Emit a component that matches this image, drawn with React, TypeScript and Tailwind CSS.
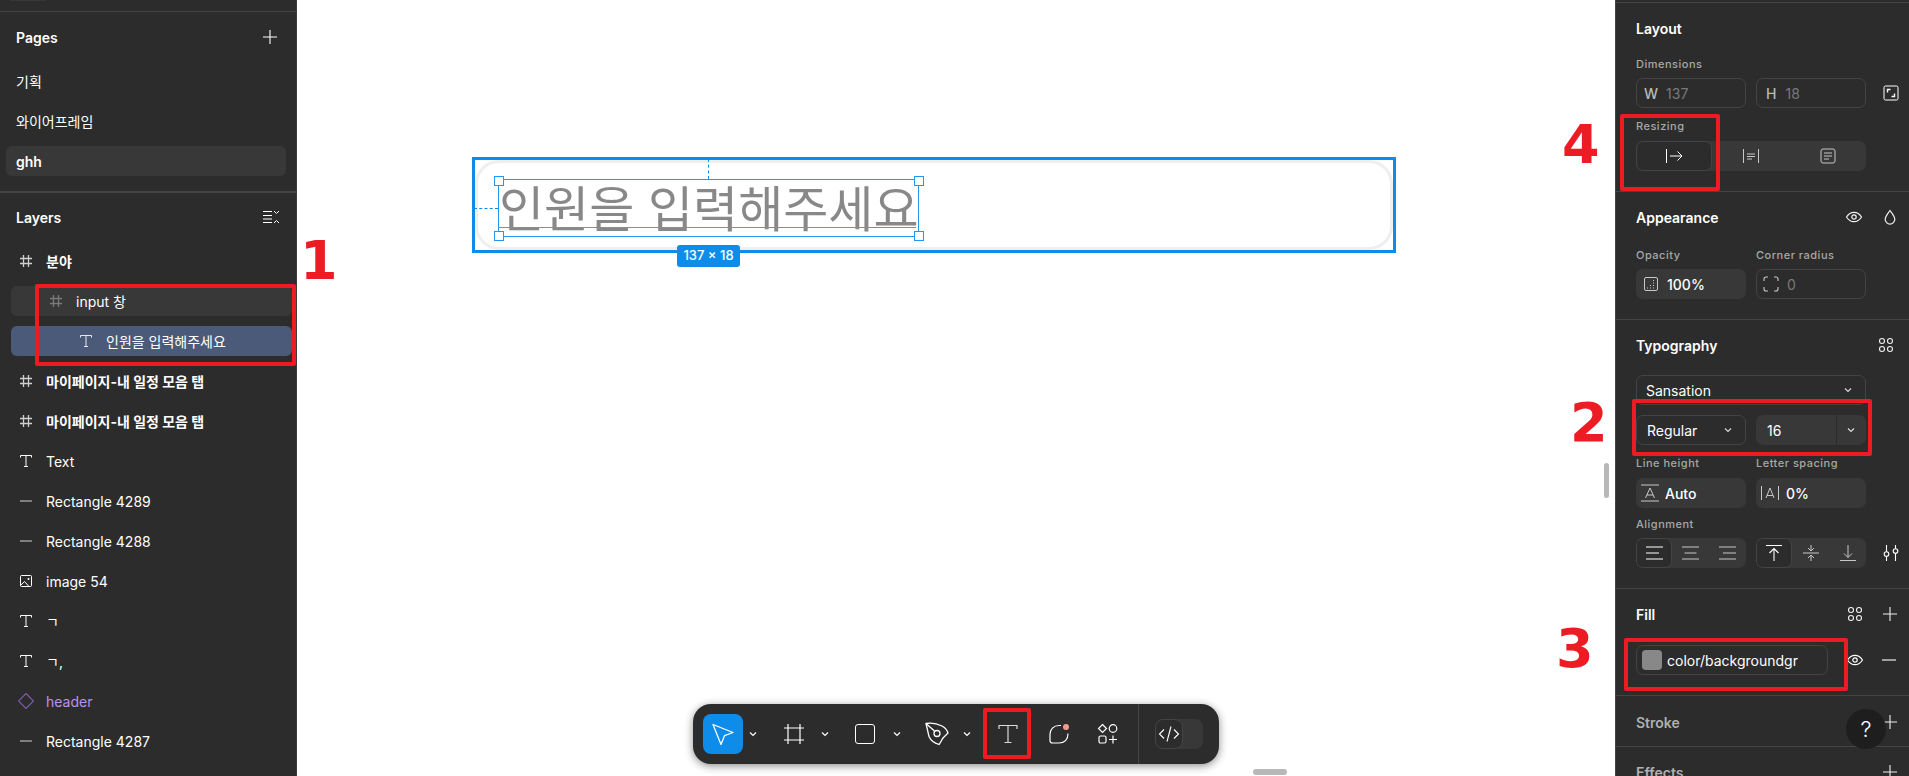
import React from "react";

type IconProps = { className?: string };
const S = ({ children, size = 16, box = 16, className = "" }: { children: React.ReactNode; size?: number; box?: number; className?: string }) => (
  <svg width={size} height={size} viewBox={`0 0 ${box} ${box}`} fill="none" stroke="currentColor" strokeWidth={1} className={`shrink-0 ${className}`}>
    {children}
  </svg>
);

const Hash = ({ className }: IconProps) => (
  <S className={className}><path d="M5.500 2v12M10.500 2v12M2 5.500h12M2 10.500h12" strokeWidth={1.3} /></S>
);
const TIcon = ({ className, size = 16 }: IconProps & { size?: number }) => (
  <S className={className} size={size}><path d="M2.500 4.500V2.500h11v2M8 2.500v11M6 13.500h4" /></S>
);
const Dash = () => <S><path d="M2 8h12" stroke="#9a9a9a" strokeWidth={1.5} /></S>;
const ImageIcon = () => (
  <S>
    <rect x="2.500" y="2.500" width="11" height="11" rx="1" />
    <path d="M2.500 12.500l4-4 4.500 5" />
    <circle cx="10.500" cy="6" r="1" fill="currentColor" stroke="none" />
  </S>
);
const Diamond = () => (
  <S><path d="M8 .5l7.500 7.500-7.500 7.500L.5 8z" stroke="#7d5ba6" strokeWidth={1.2} /></S>
);
const Plus = ({ size = 16 }: { size?: number }) => (
  <S size={size}><path d="M8 1v14M1 8h14" strokeWidth={1.1} /></S>
);
const Minus = () => <S><path d="M1 8h14" strokeWidth={1.1} /></S>;
const Eye = () => (
  <S size={18} box={18}>
    <path d="M1.500 9C3.500 5.800 6 4.300 9 4.300S14.500 5.800 16.500 9c-2 3.200-4.500 4.700-7.500 4.700S3.500 12.200 1.500 9z" strokeWidth={1.2} />
    <circle cx="9" cy="9" r="2.200" strokeWidth={1.2} />
  </S>
);
const Drop = () => (
  <S size={18} box={18}><path d="M9 2.500C6.500 5.800 4.200 8.300 4.200 11.300a4.800 4.800 0 0 0 9.600 0C13.800 8.300 11.500 5.800 9 2.500z" strokeWidth={1.2} /></S>
);
const Dots = () => (
  <S size={18} box={18}>
    <circle cx="5" cy="5" r="2.500" strokeWidth={1.1} />
    <circle cx="13" cy="5" r="2.500" strokeWidth={1.1} />
    <circle cx="5" cy="13" r="2.500" strokeWidth={1.1} />
    <circle cx="13" cy="13" r="2.500" strokeWidth={1.1} />
  </S>
);
const Chev = ({ className = "" }: IconProps) => (
  <svg width="8" height="6" viewBox="0 0 8 6" fill="none" stroke="currentColor" strokeWidth={1.2} className={`shrink-0 ${className}`}>
    <path d="M1 1.500l3 3 3-3" />
  </svg>
);

const Row = ({ icon, label, indent = "pl-[7px]", iconTone = "text-[#d0d0d0]", bold, bg, tone = "text-white" }: { icon: React.ReactNode; label: string; indent?: string; iconTone?: string; bold?: boolean; bg?: string; tone?: string }) => (
  <div className="h-10 flex items-center pl-[11px]">
    <div className={`h-[30px] w-[281px] flex items-center gap-3 rounded-md ${indent} ${bg ?? ""}`}>
      <span className={iconTone}>{icon}</span>
      <span className={`text-[14px] whitespace-nowrap ${bold ? "font-bold" : "font-normal"} ${tone}`}>{label}</span>
    </div>
  </div>
);

const Label = ({ children }: { children: React.ReactNode }) => (
  <div className="h-[14px] flex items-center text-[11px] font-medium tracking-[0.5px] text-[#a8a8a8] whitespace-nowrap">{children}</div>
);
const TitleRow = ({ title, muted, right, mr = "-mr-[10px]" }: { title: string; muted?: boolean; right?: React.ReactNode; mr?: string }) => (
  <div className="h-5 flex items-center justify-between text-[#f0f0f0]">
    <div className={`text-[14px] font-semibold ${muted ? "text-[#b0b0b0]" : "text-white"}`}>{title}</div>
    <div className={`flex items-center gap-[18px] ${mr}`}>{right}</div>
  </div>
);
const Box = ({ children, filled, className = "" }: { children: React.ReactNode; filled?: boolean; className?: string }) => (
  <div className={`h-[30px] w-[110px] shrink-0 rounded-[7px] flex items-center text-[14px] ${filled ? "bg-[#383838]" : "border border-[#444444]"} ${className}`}>{children}</div>
);

const Section = ({ children, className = "" }: { children: React.ReactNode; className?: string }) => (
  <section className={`px-5 border-b border-[#444444] ${className}`}>{children}</section>
);

const AlignLines = ({ kind }: { kind: "l" | "c" | "r" }) => {
  const d =
    kind === "l" ? "M1 3h17M1 9h13M1 15h17" : kind === "c" ? "M1 3h17M3.500 9h12M1 15h17" : "M1 3h17M5 9h13M1 15h17";
  return <S size={19} box={19} className={kind === "l" ? "text-white" : "text-[#c8c8c8]"}><path d={d} strokeWidth={1.1} /></S>;
};

const Toolbar = () => (
  <div className="absolute left-[396px] top-[704px] w-[526px] h-[60px] rounded-[18px] bg-[#2c2c2c] shadow-[0_2px_8px_rgba(0,0,0,0.45)] flex items-center pl-[10px] text-white">
    <div className="w-10 h-10 rounded-lg bg-[#0d8ce9] flex items-center justify-center">
      <svg width="24" height="24" viewBox="0 0 24 24" fill="none" stroke="currentColor" strokeWidth={1.3} strokeLinejoin="round">
        <path d="M2 2.500l20 8-8.500 3.200L10 22.500z" />
      </svg>
    </div>
    <Chev className="ml-[6px]" />
    <svg width="22" height="22" viewBox="0 0 22 22" fill="none" stroke="currentColor" strokeWidth={1.2} className="ml-[26px] shrink-0">
      <path d="M5 1v20M17 1v20M1 5h20M1 17h20" />
    </svg>
    <Chev className="ml-[16px]" />
    <div className="ml-[26px] w-5 h-5 shrink-0 rounded-[3px] border-[1.5px] border-white" />
    <Chev className="ml-[18px]" />
    <svg width="24" height="24" viewBox="0 0 24 24" fill="none" stroke="currentColor" strokeWidth={1.3} strokeLinejoin="round" className="ml-[24px] shrink-0">
      <path d="M1 1.500C6 .5 12 1.500 17 4c3 1.500 5 4 6 7l-5 5c-1.500 2-2 4-4 6.500C9 21 6 19 4 14.500 3 10 2 6 1 1.500z" />
      <circle cx="12" cy="11.500" r="3" />
      <path d="M1 1.500l8.500 7.500" />
    </svg>
    <Chev className="ml-[14px]" />
    <svg width="22" height="22" viewBox="0 0 22 22" fill="none" stroke="#d8d8d8" strokeWidth={1.2} className="ml-[26px] shrink-0">
      <path d="M2 6V2.500h18V6M11 2.500v17M7.500 19.500h7" />
    </svg>
    <svg width="24" height="24" viewBox="0 0 24 24" fill="none" stroke="currentColor" strokeWidth={1.2} className="ml-[28px] shrink-0">
      <path d="M14 3.500H12C6.500 3.500 3 7.500 3 12.500v6c0 1.500 1 2.500 2.500 2.500H12c5.500 0 9-3.500 9-9.500" />
      <circle cx="19" cy="5" r="3" fill="#f79a8c" stroke="none" />
    </svg>
    <svg width="22" height="22" viewBox="0 0 22 22" fill="none" stroke="currentColor" strokeWidth={1.2} className="ml-[26px] shrink-0">
      <path d="M5.500 1.500l4 4-4 4-4-4z" />
      <circle cx="16" cy="5.500" r="3.800" />
      <rect x="2" y="13" width="7" height="7" rx="1.500" />
      <path d="M16 12.500v8M12 16.500h8" />
    </svg>
    <div className="ml-[19px] w-px h-[60px] shrink-0 bg-[#444444]" />
    <div className="ml-[16px] w-12 h-[30px] shrink-0 rounded-lg bg-[#383838]">
      <div className="w-7 h-[30px] rounded-lg bg-[#2c2c2c] border border-[#444444] flex items-center justify-center">
        <svg width="22" height="18" viewBox="0 0 22 18" fill="none" stroke="currentColor" strokeWidth={1.1} className="shrink-0">
          <path d="M6 4.500L1.500 9 6 13.500M16 4.500L20.500 9 16 13.500M13 1.500L9 16.500" />
        </svg>
      </div>
    </div>
  </div>
);

const Handle = ({ x, y }: { x: number; y: number }) => (
  <div className="absolute w-[10px] h-[10px] bg-white border-[1.5px] border-[#2196f3]" style={{ left: x, top: y }} />
);

const RedBox = ({ className }: { className: string }) => (
  <div className={`absolute border-[4px] border-[#ed1c24] rounded-[2px] ${className}`} />
);
const RedNum = ({ n, className }: { n: string; className: string }) => (
  <div className={`absolute text-[54px] leading-[54px] font-bold text-[#ed1c24] font-['DejaVu_Sans',sans-serif] ${className}`}>{n}</div>
);

export default function App() {
  return (
    <div className="relative w-[1909px] h-[776px] overflow-hidden flex bg-white font-['Inter','Noto_Sans_CJK_KR',sans-serif]">
      {/* left */}
      <aside className="w-[297px] h-full shrink-0 bg-[#2c2c2c] border-r border-[#3c3c3c] overflow-hidden">
        <div className="h-3 border-b border-[#444444] pl-[10px]">
          <div className="w-[36px] h-px rounded-b bg-[#383838]" />
        </div>
        <div className="pt-[5px] pb-[10px] border-b-2 border-[#444444]">
          <div className="h-10 flex items-center justify-between pl-4 pr-[18px] text-white">
            <span className="text-[14px] font-semibold">Pages</span>
            <Plus />
          </div>
          <div className="mt-1">
            <div className="h-10 flex items-center pl-4 text-[14px] text-white">기획</div>
            <div className="h-10 flex items-center pl-4 text-[14px] text-white">와이어프레임</div>
            <div className="h-10 flex items-center pl-[6px]">
              <div className="h-[30px] w-[280px] rounded-md bg-[#383838] flex items-center pl-[10px] text-[14px] font-semibold text-white">ghh</div>
            </div>
          </div>
        </div>
        <div className="pt-[4px]">
          <div className="h-10 flex items-center justify-between pl-4 pr-[17px] text-white">
            <span className="text-[14px] font-semibold">Layers</span>
            <svg width="16" height="14" viewBox="0 0 16 14" fill="none" stroke="currentColor" strokeWidth={1}>
              <path d="M0 1.500h9M0 5.500h9M0 9h9M0 12.500h9M11 1l2.500 2.500L16 1M11 13l2.500-2.500L16 13" />
            </svg>
          </div>
          <div className="mt-1">
            <Row icon={<Hash />} label="분야" bold />
            <Row icon={<Hash />} label="input 창" indent="pl-[37px]" iconTone="text-[#7a7a7a]" bg="bg-[#383838]" />
            <Row icon={<TIcon />} label="인원을 입력해주세요" indent="pl-[67px]" iconTone="text-[#e8e8e8]" bg="bg-[#4a5a78]" />
            <Row icon={<Hash />} label="마이페이지-내 일정 모음 탭" bold />
            <Row icon={<Hash />} label="마이페이지-내 일정 모음 탭" bold />
            <Row icon={<TIcon />} label="Text" iconTone="text-white" />
            <Row icon={<Dash />} label="Rectangle 4289" />
            <Row icon={<Dash />} label="Rectangle 4288" />
            <Row icon={<ImageIcon />} label="image 54" iconTone="text-white" />
            <Row icon={<TIcon />} label="ㄱ" iconTone="text-white" />
            <Row icon={<TIcon />} label="ㄱ," iconTone="text-white" />
            <Row icon={<Diamond />} label="header" tone="text-[#b794f0]" />
            <Row icon={<Dash />} label="Rectangle 4287" />
          </div>
        </div>
      </aside>

      {/* canvas */}
      <main className="flex-1 relative">
        <div className="absolute left-[175px] top-[157px] w-[924px] h-[96px] border-[3px] border-[#0d8ce9]">
          <div className="w-full h-full rounded-[24px] border-[3px] border-[#efefef]" />
        </div>
        <div className="absolute left-[177px] top-[208px] w-[24px] border-t border-dashed border-[#0d8ce9]" />
        <div className="absolute left-[411px] top-[159px] h-[20px] border-l border-dashed border-[#0d8ce9]" />
        <div className="absolute left-[201px] top-[179px] w-[421px] h-[58px] border border-[#2196f3]" />
        <div className="absolute left-[202px] top-[181px] h-[58px] flex items-center text-[49px] leading-[58px] whitespace-nowrap text-[#888888]">인원을 입력해주세요</div>
        <div className="absolute left-[201px] top-[227px] w-[418px] h-px bg-[#3aa3f0]" />
        <Handle x={197} y={176} />
        <Handle x={617} y={176} />
        <Handle x={197} y={231} />
        <Handle x={617} y={231} />
        <div className="absolute left-[380px] top-[245px] w-[63px] h-[22px] rounded-[3px] bg-[#0d8ce9] text-white text-[13px] font-medium flex items-center justify-center whitespace-nowrap">137 × 18</div>
        <Toolbar />
        <div className="absolute left-[1307px] top-[463px] w-[5px] h-[35px] rounded-full bg-[#b8b8b8]" />
        <div className="absolute left-[956px] top-[769px] w-[34px] h-[6px] rounded-full bg-[#b8b8b8]" />
      </main>

      {/* right */}
      <aside className="w-[294px] h-full shrink-0 bg-[#2c2c2c] border-l border-[#444444] overflow-hidden text-white">
        <div className="h-[3px] border-b border-[#444444]" />
        <Section className="pt-[15px] h-[189px]">
          <TitleRow title="Layout" />
          <div className="mt-[19px]"><Label>Dimensions</Label></div>
          <div className="mt-[7px] flex gap-[10px] items-center">
            <Box className="pl-[7px] gap-[8px]"><span className="text-[#b8b8b8] font-medium">W</span><span className="text-[#7a7a7a]">137</span></Box>
            <Box className="pl-[9px] gap-[9px]"><span className="text-[#b8b8b8] font-medium">H</span><span className="text-[#7a7a7a]">18</span></Box>
            <svg width="16" height="16" viewBox="0 0 16 16" fill="none" stroke="currentColor" strokeWidth={1} className="ml-[7px] shrink-0">
              <rect x="1" y="1" width="14" height="14" rx="1.500" />
              <path d="M4.500 7.500v-3h3M11.500 8.500v3h-3" strokeWidth={1.4} />
            </svg>
          </div>
          <div className="mt-[11px]"><Label>Resizing</Label></div>
          <div className="mt-[8px] w-[230px] h-[30px] rounded-[7px] bg-[#383838] flex items-center">
            <div className="w-[76px] h-[30px] rounded-[7px] bg-[#2c2c2c] border border-[#444444] flex items-center justify-center">
              <svg width="18" height="14" viewBox="0 0 18 14" fill="none" stroke="currentColor" strokeWidth={1}>
                <path d="M1.500 0v14M5 7h12M12.500 2.500L17 7l-4.500 4.500" />
              </svg>
            </div>
            <div className="w-[77px] flex justify-center text-[#c8c8c8]">
              <svg width="16" height="14" viewBox="0 0 16 14" fill="none" stroke="currentColor" strokeWidth={1}>
                <path d="M.5 0v14M15.500 0v14M4 5h8M4 7.500h8M4 10h5" />
              </svg>
            </div>
            <div className="w-[77px] flex justify-center text-[#c8c8c8]">
              <svg width="16" height="16" viewBox="0 0 16 16" fill="none" stroke="currentColor" strokeWidth={1}>
                <rect x="1" y="1" width="14" height="14" rx="2" />
                <path d="M4 5h8M4 8h8M4 11h5" />
              </svg>
            </div>
          </div>
        </Section>

        <Section className="pt-[15px] h-[128px]">
          <TitleRow title="Appearance" right={<><Eye /><Drop /></>} />
          <div className="mt-[21px] flex gap-[10px]">
            <div className="w-[110px]"><Label>Opacity</Label></div>
            <div className="w-[110px]"><Label>Corner radius</Label></div>
          </div>
          <div className="mt-[7px] flex gap-[10px]">
            <Box filled className="pl-[8px] gap-[8px]">
              <svg width="14" height="14" viewBox="0 0 14 14" fill="none" stroke="#c8c8c8" strokeWidth={1} className="shrink-0">
                <rect x=".5" y=".5" width="13" height="13" rx="1.500" />
                <path d="M3 11h1M6 11h1M9 11h1M6 8.500h1M9 8.500h1M9 6h1M9 3.500h1" />
              </svg>
              <span className="font-medium ml-[1px]">100%</span>
            </Box>
            <Box className="pl-[6px] gap-[8px]">
              <svg width="16" height="16" viewBox="0 0 16 16" fill="none" stroke="#c8c8c8" strokeWidth={1.1} className="shrink-0">
                <path d="M1 5V3a2 2 0 0 1 2-2h2M11 1h2a2 2 0 0 1 2 2v2M15 11v2a2 2 0 0 1-2 2h-2M5 15H3a2 2 0 0 1-2-2v-2" />
              </svg>
              <span className="text-[#7a7a7a]">0</span>
            </Box>
          </div>
        </Section>

        <Section className="pt-[15px] h-[269px]">
          <TitleRow title="Typography" right={<Dots />} mr="-mr-[6px]" />
          <div className="mt-[20px] w-[230px] h-[30px] rounded-[7px] border border-[#444444] flex items-center justify-between pl-[9px] pr-[13px] text-[14px]">
            <span>Sansation</span><Chev className="text-[#d8d8d8]" />
          </div>
          <div className="mt-[10px] flex gap-[10px]">
            <Box className="justify-between pl-[10px] pr-[13px]"><span>Regular</span><Chev className="text-[#d8d8d8]" /></Box>
            <Box filled className="pl-[11px]">
              <span className="w-[69px]">16</span>
              <div className="w-px h-[30px] bg-[#2c2c2c]" />
              <Chev className="ml-[10px] text-[#d8d8d8]" />
            </Box>
          </div>
          <div className="mt-[11px] flex gap-[10px]">
            <div className="w-[110px]"><Label>Line height</Label></div>
            <div className="w-[110px]"><Label>Letter spacing</Label></div>
          </div>
          <div className="mt-[8px] flex gap-[10px]">
            <Box filled className="pl-[5px] gap-[6px]">
              <svg width="18" height="18" viewBox="0 0 18 18" fill="none" stroke="#c8c8c8" strokeWidth={1} className="shrink-0">
                <path d="M0 1h18M0 17h18M4.500 14L9 4l4.500 10M6 11h6" />
              </svg>
              <span className="font-medium">Auto</span>
            </Box>
            <Box filled className="pl-[4px] gap-[6px]">
              <svg width="20" height="16" viewBox="0 0 20 16" fill="none" stroke="#c8c8c8" strokeWidth={1} className="shrink-0">
                <path d="M1.500 1v14M18.500 1v14M6 13l4-10 4 10M7 10.500h6" />
              </svg>
              <span className="font-medium">0%</span>
            </Box>
          </div>
          <div className="mt-[9px]"><Label>Alignment</Label></div>
          <div className="mt-[7px] flex gap-[10px] items-center">
            <Box filled className="overflow-hidden">
              <div className="w-[36px] h-[30px] shrink-0 rounded-[7px] bg-[#2c2c2c] border border-[#444444] flex items-center justify-center"><AlignLines kind="l" /></div>
              <div className="w-[37px] flex justify-center"><AlignLines kind="c" /></div>
              <div className="w-[37px] flex justify-center"><AlignLines kind="r" /></div>
            </Box>
            <Box filled className="overflow-hidden">
              <div className="w-[36px] h-[30px] shrink-0 rounded-[7px] bg-[#2c2c2c] border border-[#444444] flex items-center justify-center">
                <svg width="18" height="18" viewBox="0 0 18 18" fill="none" stroke="currentColor" strokeWidth={1.1}>
                  <path d="M1 1.500h16M9 17V4.500M4.500 9L9 4.500 13.500 9" />
                </svg>
              </div>
              <div className="w-[37px] flex justify-center text-[#c8c8c8]">
                <svg width="18" height="18" viewBox="0 0 18 18" fill="none" stroke="currentColor" strokeWidth={1}>
                  <path d="M1 9h16M9 1v5.500M6 4l3 3 3-3M9 17v-5.500M6 14l3-3 3 3" />
                </svg>
              </div>
              <div className="w-[37px] flex justify-center text-[#c8c8c8]">
                <svg width="18" height="18" viewBox="0 0 18 18" fill="none" stroke="currentColor" strokeWidth={1}>
                  <path d="M1 16.500h16M9 1v12.500M5 9.500l4 4 4-4" />
                </svg>
              </div>
            </Box>
            <svg width="16" height="18" viewBox="0 0 16 18" fill="none" stroke="currentColor" strokeWidth={1.1} className="ml-[7px] shrink-0">
              <circle cx="3.500" cy="10" r="2.300" />
              <circle cx="12.500" cy="7" r="2.300" />
              <path d="M3.500 1v6.700M3.500 12.300V17M12.500 1v3.700M12.500 9.300V17" />
            </svg>
          </div>
        </Section>

        <Section className="pt-[15px] h-[107px]">
          <TitleRow title="Fill" right={<><Dots /><Plus /></>} mr="-mr-[9px]" />
          <div className="mt-[21px] flex items-center">
            <div className="w-[192px] h-[30px] shrink-0 rounded-[7px] border border-[#444444] flex items-center pl-[5px] gap-[5px]">
              <div className="w-5 h-5 rounded-[4px] bg-[#888888]" />
              <span className="text-[14px]">color/backgroundgr</span>
            </div>
            <div className="ml-[18px] shrink-0"><Eye /></div>
            <div className="ml-[17px] shrink-0"><Minus /></div>
          </div>
        </Section>

        <Section className="pt-[16px] h-[51px]">
          <TitleRow title="Stroke" muted right={<Plus />} mr="-mr-[9px]" />
        </Section>
        <div className="px-5 pt-[15px]">
          <TitleRow title="Effects" muted right={<Plus />} mr="-mr-[9px]" />
        </div>
      </aside>

      {/* annotations */}
      <div className="absolute left-[1846px] top-[709px] w-10 h-10 rounded-full bg-[#1e1e1e] text-white text-[22px] font-light flex items-center justify-center">?</div>
      <RedBox className="left-[35px] top-[284px] w-[261px] h-[82px]" />
      <RedBox className="left-[1620px] top-[114px] w-[100px] h-[77px]" />
      <RedBox className="left-[1632px] top-[399px] w-[240px] h-[57px]" />
      <RedBox className="left-[1624px] top-[638px] w-[224px] h-[53px]" />
      <RedBox className="left-[983px] top-[708px] w-[48px] h-[51px]" />
      <RedNum n="1" className="left-[300px] top-[234px]" />
      <RedNum n="4" className="left-[1562px] top-[118px]" />
      <RedNum n="2" className="left-[1570px] top-[396px]" />
      <RedNum n="3" className="left-[1556px] top-[622px]" />
    </div>
  );
}
